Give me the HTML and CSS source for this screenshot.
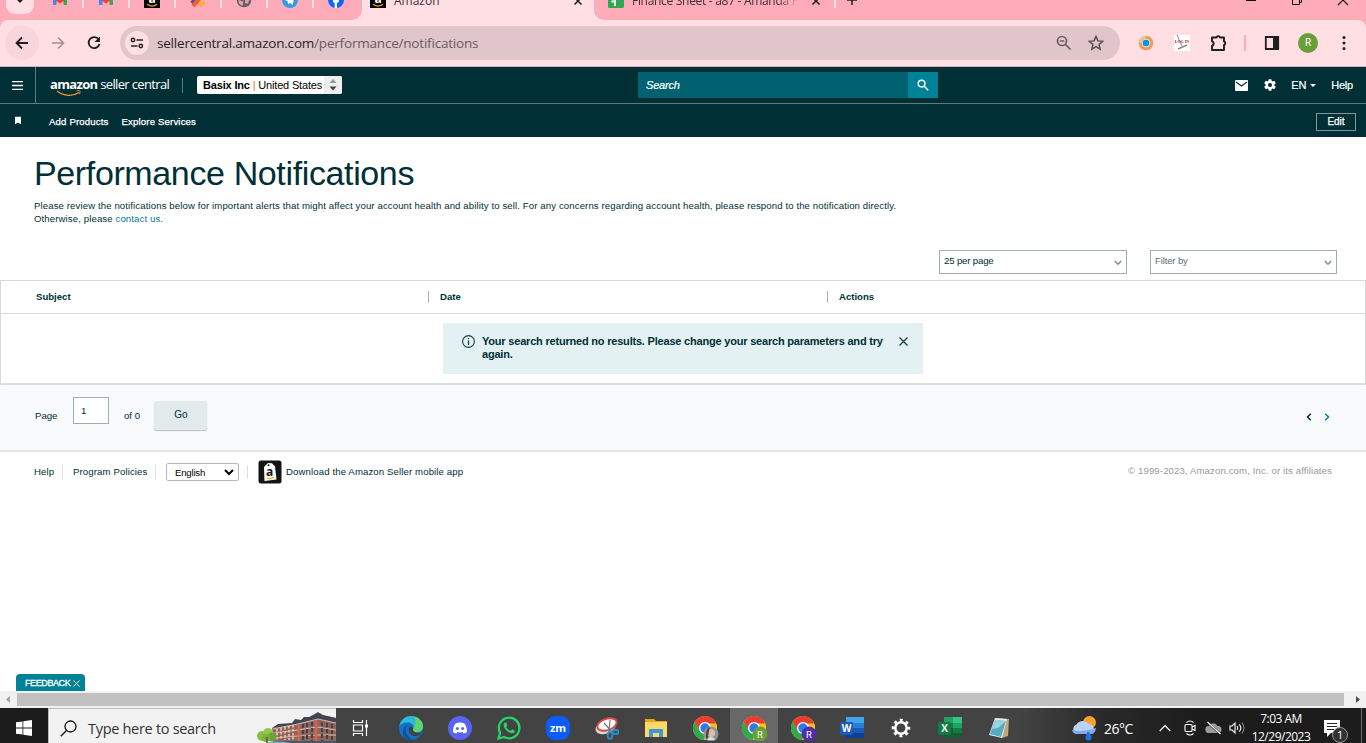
FILE: index.html
```html
<!DOCTYPE html>
<html lang="en">
<head>
    <meta charset="UTF-8">
    <meta name="viewport" content="width=device-width, initial-scale=1.0">
    <title>Performance Notifications</title>
    <link rel="stylesheet" href="styles.css">
</head>
<body>
    <!-- shared icons -->
    <svg class="defs" width="0" height="0">
        <symbol id="gmail" viewBox="0 0 16 16">
            <path fill="#4285f4" d="M1 3h3.500v10H2a1 1 0 0 1-1-1z"/>
            <path fill="#34a853" d="M11.500 3H15v9a1 1 0 0 1-1 1h-2.500z"/>
            <path fill="#ea4335" d="M1 3l7 5 7-5v3.500L8 11.500 1 6.500z"/>
        </symbol>
        <symbol id="amazon" viewBox="0 0 16 16">
            <rect width="16" height="16" fill="#000"/>
            <text x="8" y="11" text-anchor="middle" class="icon-letter">a</text>
            <path d="M3 12c3 2.500 7 2.500 10 .3" fill="none" stroke="#f90" stroke-width="1.300"/>
        </symbol>
        <symbol id="chrome" viewBox="0 0 24 24">
            <circle cx="12" cy="12" r="12" fill="#fbc116"/>
            <path fill="#ea3d2f" d="M1.600 6A12 12 0 0 1 22.400 6H12L6.800 15z"/>
            <path fill="#2da94f" d="M1.600 6l5.200 9L12 18l-1 6A12 12 0 0 1 1.600 6z"/>
            <path fill="#fbc116" d="M22.400 6A12 12 0 0 1 11.500 24l5.700-9L15 7z"/>
            <path fill="#ea3d2f" d="M12 6h10.400l.5 1.500H12z"/>
            <circle cx="12" cy="12" r="6" fill="#fff"/>
            <circle cx="12" cy="12" r="4.700" fill="#2f78ed"/>
        </symbol>
    </svg>

    <div class="browser">
        <div class="tab-strip">
            <div class="tabs-left">
                <div class="tab-search">
                    <svg width="10" height="10" viewBox="0 0 10 10"><path d="M1.500 3L5 6.500 8.500 3" fill="none" stroke="#1f1f1f" stroke-width="2"/></svg>
                </div>
                <div class="mini-tab"><svg width="16" height="16"><use href="#gmail"/></svg></div>
                <div class="mini-tab"><svg width="16" height="16"><use href="#gmail"/></svg></div>
                <div class="mini-tab"><svg width="16" height="16"><use href="#amazon"/></svg></div>
                <div class="mini-tab">
                    <svg width="16" height="16" viewBox="0 0 16 16">
                        <path d="M1.500 11l5-6" stroke="#4452a8" stroke-width="3"/>
                        <path d="M3 14l8-9" stroke="#ff5a1f" stroke-width="4"/>
                        <path d="M9.500 14l5-4" stroke="#ffb02e" stroke-width="4"/>
                    </svg>
                </div>
                <div class="mini-tab">
                    <svg width="16" height="16" viewBox="0 0 16 16">
                        <circle cx="8" cy="8" r="7.300" fill="#5f6368"/>
                        <path d="M2.500 8l5 1.500-1 4.500A6 6 0 0 1 2.500 8zM9 8h4.500l-2 4-2.500-1z" fill="#e79ea9"/>
                    </svg>
                </div>
                <div class="mini-tab">
                    <svg width="16" height="16" viewBox="0 0 16 16">
                        <circle cx="8" cy="8" r="8" fill="#2f9be8"/>
                        <path d="M3 8l9.500-4-1.800 9-3-2.200-1.600 1.600-.4-3z" fill="#fff"/>
                    </svg>
                </div>
                <div class="mini-tab last">
                    <svg width="16" height="16" viewBox="0 0 16 16">
                        <circle cx="8" cy="8" r="8" fill="#0866ff"/>
                        <path d="M6.700 16v-5.500H5V8h1.700V6.500C6.700 4 8 3.200 11 3.600v2c-1.500 0-2 .1-2 1.200V8h2l-.4 2.500H9V16z" fill="#fff"/>
                    </svg>
                </div>
            </div>
            <div class="tab active">
                <svg width="16" height="16"><use href="#amazon"/></svg>
                <span class="tab-title">Amazon</span>
                <svg class="tab-close" width="10" height="10" viewBox="0 0 10 10"><path d="M1.500 1.500l7 7M8.500 1.500l-7 7" stroke="#1f1f1f" stroke-width="1.500"/></svg>
            </div>
            <div class="tabs-right">
                <div class="tab second">
                    <svg width="16" height="16" viewBox="0 0 16 16"><rect width="16" height="16" rx="1.500" fill="#2fa84f"/><path d="M3.500 6h9M3.500 9.500h3.500M7 4v10" stroke="#fff" stroke-width="1.800"/></svg>
                    <span class="tab-title">Finance Sheet - a87 - Amanda P</span>
                    <svg class="tab-close" width="10" height="10" viewBox="0 0 10 10"><path d="M1.500 1.500l7 7M8.500 1.500l-7 7" stroke="#1f1f1f" stroke-width="1.500"/></svg>
                </div>
                <svg class="new-tab" width="12" height="12" viewBox="0 0 12 12"><path d="M6 1v10M1 6h10" stroke="#1f1f1f" stroke-width="1.500"/></svg>
                <div class="window-controls">
                    <svg width="12" height="12" viewBox="0 0 12 12"><path d="M1 6.500h10" stroke="#000"/></svg>
                    <svg width="12" height="12" viewBox="0 0 12 12"><path d="M1.500 3.500h7v7h-7zM3.500 3V1.500h7v7H9" fill="none" stroke="#000"/></svg>
                    <svg width="12" height="12" viewBox="0 0 12 12"><path d="M1 1l10 10M11 1L1 11" stroke="#000" stroke-width="1.100"/></svg>
                </div>
            </div>
        </div>

        <div class="toolbar">
            <div class="nav-btn hover">
                <svg width="16" height="16" viewBox="0 0 16 16"><path d="M14 8H3M8 2.500L2.500 8 8 13.500" fill="none" stroke="#1f1f1f" stroke-width="1.800"/></svg>
            </div>
            <div class="nav-btn">
                <svg width="16" height="16" viewBox="0 0 16 16"><path d="M2 8h11M8 2.500L13.500 8 8 13.500" fill="none" stroke="#a78f94" stroke-width="1.600"/></svg>
            </div>
            <div class="nav-btn">
                <svg width="16" height="16" viewBox="0 0 16 16"><path d="M12.700 4.500A5.500 5.500 0 1 0 13.500 9" fill="none" stroke="#1f1f1f" stroke-width="1.800"/><path d="M14 1.500V7H8.500z" fill="#1f1f1f"/></svg>
            </div>
            <div class="omnibox">
                <div class="site-info">
                    <svg width="14" height="12" viewBox="0 0 14 12"><g fill="none" stroke="#2b2226" stroke-width="1.500"><circle cx="3" cy="3" r="1.700"/><path d="M6.500 3H13M1 9h6.500"/><circle cx="10.800" cy="9" r="1.700"/></g></svg>
                </div>
                <div class="url">sellercentral.amazon.com<span>/performance/notifications</span></div>
                <svg class="zoom-icon" width="16" height="16" viewBox="0 0 16 16"><g fill="none" stroke="#6b5d61" stroke-width="1.700"><circle cx="6" cy="6" r="4.500"/><path d="M9.500 9.500l5 5M3.800 6h4.400"/></g></svg>
                <svg width="16" height="16" viewBox="0 0 16 16"><path d="M8 1.500l1.900 4.400 4.800.4-3.600 3.200 1 4.700L8 11.700l-4.100 2.500 1-4.700-3.600-3.200 4.800-.4z" fill="none" stroke="#5b4e52" stroke-width="1.500"/></svg>
            </div>
            <div class="extensions">
                <svg width="16" height="16" viewBox="0 0 16 16"><circle cx="8" cy="8" r="7.300" fill="#f29a5a"/><path d="M8 .7A7.300 7.300 0 0 0 .7 8h3A4.500 4.500 0 0 1 8 3.500z" fill="#f7bd8c"/><circle cx="8" cy="8" r="4.300" fill="#cde9f6"/><circle cx="8" cy="8" r="3.300" fill="#0b95d8"/></svg>
                <svg width="16" height="16" viewBox="0 0 16 16"><rect width="16" height="16" fill="#fff"/><path d="M3 0l5 11" stroke="#8e8a8a"/><path d="M4 14l9-4" stroke="#8e8a8a" stroke-width="1.800"/><text x="8" y="8" text-anchor="middle" class="login-letter">LOG IN</text></svg>
                <svg width="18" height="18" viewBox="0 0 18 18"><path d="M2 3.500h4.500a1.800 1.800 0 0 1 3.500 0h4V7.500a1.800 1.800 0 0 1 0 3.500v5H2v-4.300a2.200 2.200 0 0 0 0-4.300z" fill="none" stroke="#1f1f1f" stroke-width="1.900" stroke-linejoin="round"/></svg>
            </div>
            <div class="toolbar-sep"></div>
            <svg class="side-panel" width="16" height="16" viewBox="0 0 16 16"><path d="M1.800 2h12.400v12H1.800z" fill="none" stroke="#1f1f1f" stroke-width="1.800"/><path d="M9 2h5v12H9z" fill="#1f1f1f"/></svg>
            <div class="avatar">R</div>
            <svg class="menu-dots" width="4" height="16" viewBox="0 0 4 16"><g fill="#1f1f1f"><circle cx="2" cy="2.500" r="1.500"/><circle cx="2" cy="8" r="1.500"/><circle cx="2" cy="13.500" r="1.500"/></g></svg>
        </div>
    </div>

    <header class="header">
        <div class="hamburger">
            <svg width="11" height="9" viewBox="0 0 11 9"><path d="M0 .5h11M0 4.500h11M0 8.500h11" stroke="#fff" stroke-width="1.300"/></svg>
        </div>
        <div class="logo">
            <div class="logo-text"><b>amazon</b> seller central</div>
            <svg class="smile" width="28" height="7" viewBox="0 0 28 7"><path d="M1 1c7 5.500 16 5.500 22 1.500" fill="none" stroke="#f19a38" stroke-width="1.300"/><path d="M20.500 1c3-.8 4.500-.5 3 3" fill="none" stroke="#f19a38"/></svg>
        </div>
        <div class="account">
            <span class="account-name"><b>Basix Inc</b> <i>|</i> United States</span>
            <span class="account-arrows">
                <svg width="8" height="12" viewBox="0 0 8 12"><path d="M4 0l3.500 4h-7z" fill="#999"/><path d="M4 11.500L.5 7.500h7z" fill="#444"/></svg>
            </span>
        </div>
        <div class="search">
            <div class="search-input">Search</div>
            <div class="search-btn">
                <svg width="12" height="12" viewBox="0 0 12 12"><circle cx="4.600" cy="4.600" r="3.400" fill="none" stroke="#fff" stroke-width="1.400"/><path d="M7.200 7.200l4 4" stroke="#fff" stroke-width="1.500"/></svg>
            </div>
        </div>
        <div class="header-links">
            <svg width="13" height="11" viewBox="0 0 13 11"><rect width="13" height="11" rx="1" fill="#fff"/><path d="M1 2l5.500 4L12 2" fill="none" stroke="#002f36" stroke-width="1.100"/></svg>
            <svg class="gear" width="14" height="14" viewBox="0 0 24 24"><path fill="#fff" d="M19.400 13a7.500 7.500 0 0 0 0-2l2.200-1.700a.5.500 0 0 0 .1-.7l-2.100-3.600a.5.500 0 0 0-.6-.2l-2.600 1a7.600 7.600 0 0 0-1.700-1L14.300 2h-4.600l-.4 2.800a7.600 7.600 0 0 0-1.700 1L5 4.800a.5.500 0 0 0-.6.2L2.300 8.600a.5.500 0 0 0 .1.700L4.600 11a7.500 7.500 0 0 0 0 2l-2.200 1.700a.5.500 0 0 0-.1.700L4.400 19c.1.200.4.300.6.200l2.600-1a7.600 7.600 0 0 0 1.700 1l.4 2.800h4.600l.4-2.800a7.600 7.600 0 0 0 1.700-1l2.600 1c.2.100.5 0 .6-.2l2.100-3.600a.5.500 0 0 0-.1-.7zM12 15.500a3.500 3.500 0 1 1 0-7 3.500 3.500 0 0 1 0 7z"/></svg>
            <span class="lang">EN</span>
            <span class="caret"></span>
            <span class="help">Help</span>
        </div>
    </header>
    <nav class="subnav">
        <svg width="6" height="9" viewBox="0 0 7 9"><path d="M0 0h7v9L3.500 6.800 0 9z" fill="#fff"/></svg>
        <a class="add-products">Add Products</a>
        <a class="explore">Explore Services</a>
        <button class="edit-btn">Edit</button>
    </nav>

    <main>
        <div class="intro">
            <h1>Performance Notifications</h1>
            <p>Please review the notifications below for important alerts that might affect your account health and ability to sell. For any concerns regarding account health, please respond to the notification directly.<br>Otherwise, please <a>contact us.</a></p>
        </div>
        <div class="filters">
            <div class="dropdown per-page"><span>25 per page</span>
                <svg width="8" height="6" viewBox="0 0 8 6"><path d="M.8 1L4 4.300 7.200 1" fill="none" stroke="#7f8b8c" stroke-width="1.400"/></svg>
            </div>
            <div class="dropdown filter-by"><span>Filter by</span>
                <svg width="8" height="6" viewBox="0 0 8 6"><path d="M.8 1L4 4.300 7.200 1" fill="none" stroke="#7f8b8c" stroke-width="1.400"/></svg>
            </div>
        </div>
        <div class="table">
            <div class="table-head">
                <div class="th subject"><span>Subject</span></div>
                <div class="th date"><span>Date</span></div>
                <div class="th actions"><span>Actions</span></div>
            </div>
            <div class="table-body">
                <div class="alert">
                    <svg width="13" height="13" viewBox="0 0 13 13"><circle cx="6.500" cy="6.500" r="5.900" fill="none" stroke="#153f46" stroke-width="1.100"/><path d="M6.500 5.500V10M6.500 3v1.300" stroke="#153f46" stroke-width="1.300"/></svg>
                    <p>Your search returned no results. Please change your search parameters and try<br>again.</p>
                    <svg class="alert-close" width="9" height="9" viewBox="0 0 9 9"><path d="M.5.5l8 8M8.500.5l-8 8" stroke="#153f46" stroke-width="1.200"/></svg>
                </div>
            </div>
        </div>
        <div class="pagination">
            <span class="page-label">Page</span>
            <div class="page-input">1</div>
            <span class="page-total">of 0</span>
            <button class="go-btn">Go</button>
            <div class="arrows">
                <svg width="6" height="8" viewBox="0 0 6 8"><path d="M4.800.8L1.500 4l3.300 3.200" fill="none" stroke="#002f36" stroke-width="1.500"/></svg>
                <svg width="6" height="8" viewBox="0 0 6 8"><path d="M1.200.8L4.500 4 1.200 7.200" fill="none" stroke="#008296" stroke-width="1.500"/></svg>
            </div>
        </div>
    </main>

    <footer class="footer">
        <a class="f-help">Help</a>
        <a class="f-policies">Program Policies</a>
        <div class="f-lang">
            <div class="lang-select"><span>English</span>
                <svg width="10" height="7" viewBox="0 0 10 7"><path d="M1 1l4 4 4-4" fill="none" stroke="#000" stroke-width="2"/></svg>
            </div>
        </div>
        <div class="f-app">
            <svg width="24" height="24" viewBox="0 0 24 24"><rect x=".5" y=".5" width="23" height="23" rx="2.500" fill="#141414"/><path d="M6 7l4-4 4 .3 3 3.200 1.500 13-12 1.500z" fill="#fff"/><circle cx="10.500" cy="5.300" r="1" fill="#141414"/><text x="11.800" y="15.500" text-anchor="middle" class="app-letter">a</text><path d="M9 18c2.500 1 5 .6 7-1" fill="none" stroke="#f5a623" stroke-width="1.200"/></svg>
            <a>Download the Amazon Seller mobile app</a>
        </div>
        <span class="copyright">© 1999-2023, Amazon.com, Inc. or its affiliates</span>
    </footer>

    <div class="feedback"><span>FEEDBACK</span>
        <svg width="7" height="7" viewBox="0 0 7 7"><path d="M.5.5l6 6M6.500.5l-6 6" stroke="#fff"/></svg>
    </div>

    <div class="scrollbar">
        <svg width="17" height="17" viewBox="0 0 17 17"><path d="M6 8.500L10 5v7z" fill="#a3a3a3"/></svg>
        <div class="thumb"></div>
        <svg width="22" height="17" viewBox="0 0 22 17"><path d="M16 8.500L12 5v7z" fill="#505050"/></svg>
    </div>

    <div class="taskbar">
        <div class="start">
            <svg width="16" height="16" viewBox="0 0 16 16"><path fill="#fff" d="M0 2.300L6.500 1.400v6.200H0zM7.300 1.200L16 0v7.600H7.300zM0 8.400h6.500v6.200L0 13.700zM7.300 8.400H16V16l-8.700-1.200z"/></svg>
        </div>
        <div class="task-search">
            <svg width="17" height="17" viewBox="0 0 17 17"><circle cx="10.500" cy="6.500" r="5.500" fill="none" stroke="#111" stroke-width="1.300"/><path d="M6.500 10.500L.8 16.200" stroke="#111" stroke-width="1.300"/></svg>
            <span>Type here to search</span>
            <svg class="building" width="80" height="34" viewBox="0 0 80 34">
                <path d="M16 17L40 11l20-6 4-3 3 2 13 3v27H18z" fill="#9a6255"/>
                <path d="M16 17L22 13l14-1 3-4 6 1 3-3 5 0 4-2 5-3 4 3 14 3v5L62 8 40 13z" fill="#3e4654"/>
                <path d="M17 18l25-5 20-5 18 4M17 22l25-3 19-3 19 3M18 27l24-2 19-1h19" fill="none" stroke="#e3cfc4" stroke-width=".8"/>
                <path d="M21 18v11M25 17v12M29 16v13M33 15v14M37 14v15" stroke="#d8d5d0" stroke-width="1.500" stroke-dasharray="2.500 1.500"/>
                <path d="M47 13v17M51 12v18M56 11v19M66 11v19M71 12v18M76 13v17" stroke="#34465a" stroke-width="2.200" stroke-dasharray="4 2"/>
                <path d="M43 13v19M60 9v23" stroke="#c9694f" stroke-width="2.500"/>
                <path d="M17 30h63v4H17z" fill="#475764"/>
                <path d="M5 34c10-5 25-4 38 0z" fill="#61b9c6"/>
                <circle cx="6" cy="25" r="5" fill="#8bbd45"/><circle cx="12" cy="22" r="5" fill="#93c64c"/><circle cx="16" cy="26" r="4.500" fill="#6fa036"/><circle cx="10" cy="27" r="4" fill="#7db13e"/>
                <path d="M11 26v8" stroke="#6a4e32" stroke-width="1.500"/>
            </svg>
        </div>
        <div class="task-apps">
            <div class="task task-view">
                <svg width="17" height="16" viewBox="0 0 17 16"><path d="M1.500 0v2.500h9V0M1.500 5h9v6h-9zM1.500 16v-2.500h9V16M14.500 0v16" fill="none" stroke="#fff" stroke-width="1.200"/><path d="M13 4.500h3v3h-3z" fill="#fff"/></svg>
            </div>
            <div class="task">
                <svg width="24" height="24" viewBox="0 0 24 24">
                    <circle cx="12" cy="12" r="12" fill="#1272c4"/>
                    <path d="M.3 10C2 3 7 0 12 0c7 0 12 5 12 10.500 0 4-3 5.500-6 5.500-3.500 0-4.500-1.500-4-2.500C16 9 12 6.500 8.500 6.500 5 6.500 2 8 .3 10z" fill="#2fb8d8"/>
                    <path d="M15 .5c6 1.500 9 5.500 9 10 0 4-3 5.500-6 5.500-3.500 0-4.500-1.500-4-2.500 2-2.500 4-8 1-13z" fill="#5fd46a"/>
                    <path d="M14 13.500c0 3.500 5 4.500 9 3-2 3.500-5.500 4-8 3.500-4-1-6-4.500-5-8 .7-2 3-2 4 0z" fill="#424242"/>
                    <path d="M8 9c-3 6 0 12 6 14.800C8 24.500 3 21 4 15c.5-3 2-5 4-6z" fill="#0f4f9d"/>
                </svg>
            </div>
            <div class="task">
                <svg width="24" height="24" viewBox="0 0 24 24"><circle cx="12" cy="12" r="12" fill="#5865f2"/><path d="M7.500 7.500c3-1.200 6-1.200 9 0 2 3 2.700 6 2.500 8.500-1.500 1-2.500 1.300-3.500 1.500l-.9-1.400c-1.700.4-3.500.4-5.200 0l-.9 1.400C7.500 17.300 6.300 17 5 16c-.2-3 .7-6 2.500-8.500z" fill="#fff"/><circle cx="9.400" cy="12.500" r="1.500" fill="#5865f2"/><circle cx="14.600" cy="12.500" r="1.500" fill="#5865f2"/></svg>
            </div>
            <div class="task">
                <svg width="24" height="24" viewBox="0 0 24 24"><path d="M1.500 22.500l1.600-5.600A10.300 10.300 0 1 1 7.200 21z" fill="none" stroke="#25d366" stroke-width="2.300"/><path d="M8 6.500c-2 1-1.700 3.700 0 6.200 2.200 3.200 5.500 5 7.800 4.600 1.500-.3 2.200-1.500 2-2.600l-2.600-1.400-1.500 1.500c-2-.7-3.500-2.200-4.400-4l1.100-1.400-1-2.700z" fill="#25d366"/></svg>
            </div>
            <div class="task">
                <svg width="24" height="24" viewBox="0 0 24 24"><rect width="24" height="24" rx="9" fill="#0b5cff"/><text x="12" y="15.500" text-anchor="middle" class="zoom-letter">zm</text></svg>
            </div>
            <div class="task">
                <svg width="24" height="24" viewBox="0 0 24 24"><ellipse cx="11" cy="11" rx="10.500" ry="6.500" transform="rotate(-20 11 12)" fill="#d7d7da"/><ellipse cx="12" cy="8.500" rx="10" ry="5.700" transform="rotate(-18 12 8.500)" fill="#fff" stroke="#d94a48" stroke-width="2"/><path d="M9 7l9 10M15 4l-1 13" stroke="#777" stroke-width="1.200"/><g fill="none" stroke="#2b8fd0" stroke-width="1.800"><ellipse cx="15" cy="19.500" rx="2.300" ry="3.300"/><ellipse cx="20.500" cy="16" rx="3.300" ry="2"/></g></svg>
            </div>
            <div class="task">
                <svg width="24" height="24" viewBox="0 0 24 24"><path d="M1 3h9l2 2h11v16H1z" fill="#e8a51d"/><path d="M1 6h22v15H1z" fill="#ffd767"/><path d="M5 13h14v8h-4v-4H9v4H5z" fill="#3c99d9"/></svg>
            </div>
            <div class="task">
                <svg width="28" height="26" viewBox="-2 -1 28 26"><use href="#chrome" width="24" height="24"/><circle cx="18" cy="18" r="7.500" fill="#879894"/><circle cx="18" cy="17" r="4" fill="#e0b8ad"/><path d="M13 22c0-8 1-10 4-11-1 4-2 8-2 12z" fill="#4b4445"/><path d="M14 24c1-4 7-4 8 0z" fill="#d9dde0"/></svg>
            </div>
            <div class="task current">
                <svg width="28" height="26" viewBox="-2 -1 28 26"><use href="#chrome" width="24" height="24"/><circle cx="18" cy="18" r="7.500" fill="#689f38"/><text x="18" y="21.500" text-anchor="middle" class="badge-letter">R</text></svg>
            </div>
            <div class="task">
                <svg width="28" height="26" viewBox="-2 -1 28 26"><use href="#chrome" width="24" height="24"/><circle cx="18" cy="18" r="7.500" fill="#512da8"/><text x="18" y="21.500" text-anchor="middle" class="badge-letter">R</text></svg>
            </div>
            <div class="task">
                <svg width="24" height="24" viewBox="0 0 24 24"><path d="M6 1h18v6H6z" fill="#41a5ee"/><path d="M6 7h18v5H6z" fill="#2b7cd3"/><path d="M6 12h18v5H6z" fill="#185abd"/><path d="M6 17h18v5H6z" fill="#103f91"/><rect y="6" width="13" height="13" rx="1" fill="#185abd"/><text x="6.500" y="16" text-anchor="middle" class="office-letter">W</text></svg>
            </div>
            <div class="task">
                <svg width="24" height="24" viewBox="0 0 24 24"><circle cx="12" cy="12" r="5.700" fill="none" stroke="#fff" stroke-width="2.500"/><circle cx="12" cy="12" r="7.800" fill="none" stroke="#fff" stroke-width="3" stroke-dasharray="3 3.126" stroke-dashoffset="1.500"/></svg>
            </div>
            <div class="task">
                <svg width="24" height="24" viewBox="0 0 24 24"><path d="M6 1h9v6H6z" fill="#21a366"/><path d="M15 1h9v6h-9z" fill="#33c481"/><path d="M6 7h9v5H6z" fill="#107c41"/><path d="M15 7h9v5h-9z" fill="#21a366"/><path d="M6 12h18v10H6z" fill="#185c37"/><path d="M15 12h9v5h-9z" fill="#107c41"/><rect y="6" width="13" height="13" rx="1" fill="#107c41"/><text x="6.500" y="16" text-anchor="middle" class="office-letter">X</text></svg>
            </div>
            <div class="task">
                <svg width="24" height="24" viewBox="0 0 24 24"><path d="M9 2l13 1-1 17-6 2z" fill="#c2a878"/><path d="M8 2l12 1-5 19-13-3z" fill="#d8eef4"/><path d="M8 4l11 1-5 16-11-3z" fill="#55abc0"/><path d="M8 4l11 1-8 7-6 1z" fill="#9ad3de"/></svg>
            </div>
        </div>
        <div class="tray">
            <svg class="weather" width="26" height="26" viewBox="0 0 26 26"><circle cx="18.500" cy="7.500" r="6.500" fill="#f8a12f"/><path d="M6 19a5 5 0 0 1-.5-9.500A7.500 7.500 0 0 1 18 9a5.500 5.500 0 0 1 2.500 10z" fill="#b9d2f7"/><path d="M6 19a5 5 0 0 1-5-4c7 2 15 1 24-2-.5 4-2.500 6-4.500 6z" fill="#82aaec"/><path d="M17 16c2 3 3.500 4.500 3.500 6.500a3 3 0 0 1-6 0c0-2 1.500-4 2.500-6.500z" fill="#1d76e8"/></svg>
            <span class="temp">26°C</span>
            <svg class="chevron" width="12" height="8" viewBox="0 0 12 8"><path d="M.7 7L6 1.500 11.300 7" fill="none" stroke="#fff" stroke-width="1.200"/></svg>
            <svg class="meet" width="12" height="16" viewBox="0 0 12 16"><g fill="none" stroke="#fff" stroke-width="1.100"><rect x="1" y="4.500" width="7" height="7" rx="1"/><path d="M8 7l3-1.500v5L8 9M2.500 2.500c2-1.700 5-1.700 7 0M2.500 13.500c2 1.700 5 1.700 7 0"/></g></svg>
            <svg class="cloud" width="17" height="14" viewBox="0 0 17 14"><path d="M4 12a3.500 3.500 0 0 1-.3-7A5 5 0 0 1 12.500 5a3.500 3.500 0 0 1 1 7z" fill="#9b9b9b"/><path d="M2 1l13.500 12" stroke="#222" stroke-width="2.300"/><path d="M2.500 1l13 12" stroke="#fff" stroke-width="1.100"/></svg>
            <svg class="sound" width="16" height="14" viewBox="0 0 16 14"><g fill="none" stroke="#fff" stroke-width="1.100"><path d="M1 5h2l3-3v10L3 9H1zM8 5c1 1.300 1 2.700 0 4M10.300 3.300c1.800 2.300 1.800 5.100 0 7.400"/><path d="M12.800 1.500c2.600 3.300 2.600 7.700 0 11" stroke="#888"/></g></svg>
            <div class="clock"><span>7:03 AM</span><span>12/29/2023</span></div>
            <div class="notice">
                <svg width="16" height="17" viewBox="0 0 16 17"><path d="M0 0h16v13H7l-4 4v-4H0z" fill="#fff"/><path d="M3 3.500h10M3 6.500h10M3 9.500h7" stroke="#222" stroke-width="1.100"/></svg>
                <span class="notice-count">1</span>
            </div>
        </div>
    </div>
</body>
</html>
```
FILE: styles.css
```css
* {
    box-sizing: border-box;
}
body {
    margin: 0;
    width: 1366px;
    height: 743px;
    overflow: hidden;
    display: flex;
    flex-direction: column;
    background-color: #fff;
    color: #002f36;
    font-family: "Liberation Sans", Arial, sans-serif;
    font-size: 9.6px;
}
svg {
    display: block;
    flex-shrink: 0;
}
.defs {
    position: absolute;
}
button {
    font-family: inherit;
    padding: 0;
}
span, a, p {
    white-space: nowrap;
}

/* browser chrome */
.browser {
    height: 67px;
    flex-shrink: 0;
    overflow: hidden;
    background-color: #ffacba;
    font-family: "Open Sans", "Noto Sans", sans-serif;
}
.tab-strip {
    display: flex;
    height: 40px;
    margin-top: -20px;
    background-color: #ffdee4;
    color: #3b3033;
    font-size: 12px;
}
.tabs-left {
    display: flex;
    align-items: center;
    width: 362px;
    padding-left: 6px;
    background-color: #ffacba;
    border-bottom-right-radius: 10px;
}
.tab-search {
    display: flex;
    align-items: center;
    justify-content: center;
    width: 28px;
    height: 28px;
    margin-right: 4px;
    border-radius: 9px;
    background-color: #ffdee4;
}
.mini-tab {
    display: flex;
    align-items: center;
    justify-content: center;
    flex-shrink: 0;
    width: 46px;
    height: 16px;
    border-right: 2px solid #ffdee4;
}
.mini-tab.last {
    border-color: transparent;
}
.tab {
    display: flex;
    align-items: center;
}
.tab-title {
    line-height: 18px;
    margin-top: 2px;
    margin-left: 8px;
}
.tab.active {
    width: 232px;
    padding-left: 8px;
}
.tab-close {
    margin-left: auto;
    margin-top: 2px;
}
.tab.active .tab-close {
    margin-right: 11px;
}
.tabs-right {
    display: flex;
    align-items: center;
    flex: 1;
    padding-left: 14px;
    background-color: #ffacba;
    border-bottom-left-radius: 10px;
}
.tab.second {
    width: 228px;
    height: 16px;
    border-right: 2px solid #ffdee4;
}
.tab.second .tab-title {
    width: 166px;
    overflow: hidden;
    letter-spacing: -0.3px;
    -webkit-mask-image: linear-gradient(to right, #000 88%, transparent);
    mask-image: linear-gradient(to right, #000 88%, transparent);
}
.tab.second .tab-close {
    margin-right: 13px;
}
.new-tab {
    margin-left: 10px;
}
.window-controls {
    display: flex;
    gap: 34px;
    margin-left: auto;
    margin-right: 17px;
}
.toolbar {
    display: flex;
    align-items: center;
    height: 47px;
    padding: 0 20px 1px 5px;
    border-radius: 8px 8px 0 0;
    border-bottom: 1px solid #d2b4ba;
    background-color: #ffdee4;
}
.nav-btn {
    display: flex;
    align-items: center;
    justify-content: center;
    width: 34px;
    height: 34px;
    margin-right: 2px;
    border-radius: 50%;
}
.nav-btn.hover {
    background-color: #f7d7dd;
}
.omnibox {
    display: flex;
    align-items: center;
    width: 1000px;
    height: 34px;
    margin-left: 7px;
    padding: 0 16px 0 5px;
    border-radius: 17px;
    background-color: #e0c5ca;
}
.site-info {
    display: flex;
    align-items: center;
    justify-content: center;
    width: 24px;
    height: 24px;
    border-radius: 50%;
    background-color: #ffdee4;
}
.url {
    margin-left: 8px;
    color: #2b2226;
    font-size: 13.5px;
    letter-spacing: -0.2px;
    white-space: nowrap;
}
.url span {
    color: #6b5a60;
}
.zoom-icon {
    margin-left: auto;
    margin-right: 16px;
}
.extensions {
    display: flex;
    align-items: center;
    gap: 20px;
    margin-left: 18px;
}
.toolbar-sep {
    width: 2px;
    height: 16px;
    margin-left: 16px;
    background-color: #ffacba;
}
.side-panel {
    margin-left: 18px;
}
.avatar {
    width: 20px;
    height: 20px;
    margin-left: 18px;
    border-radius: 50%;
    background-color: #689f38;
    color: #fff;
    font: 10px/20px Roboto, sans-serif;
    text-align: center;
}
.menu-dots {
    margin-left: 24px;
}

/* seller central header */
.header {
    display: flex;
    align-items: center;
    height: 37px;
    flex-shrink: 0;
    border-bottom: 1px solid #5f7a7e;
    background-color: #002f36;
    color: #fff;
    font-size: 11px;
}
.hamburger {
    display: flex;
    align-items: center;
    width: 36px;
    height: 36px;
    padding-left: 12px;
    border-right: 1px solid #5f7a7e;
}
.logo {
    display: flex;
    flex-direction: column;
    width: 147px;
    height: 15px;
    padding-left: 14px;
    border-right: 1px solid #5f7a7e;
    font-family: "Open Sans", sans-serif;
}
.logo-text {
    font-size: 13px;
    line-height: 14px;
    margin-top: -1px;
    white-space: nowrap;
    letter-spacing: -0.65px;
}
.smile {
    margin-left: 6px;
    margin-top: -1px;
}
.account {
    display: flex;
    width: 145px;
    height: 18px;
    margin-left: 14px;
    border-radius: 2px;
    background-color: #fff;
    color: #000;
    overflow: hidden;
}
.account-name {
    width: 127px;
    padding-left: 6px;
    line-height: 19px;
    letter-spacing: -0.17px;
}
.account-name i {
    color: #e77600;
    font-style: normal;
}
.account-arrows {
    display: flex;
    align-items: center;
    justify-content: center;
    flex: 1;
    background-color: #eee;
}
.search {
    display: flex;
    width: 300px;
    height: 26px;
    margin-left: 296px;
}
.search-input {
    flex: 1;
    padding-left: 8px;
    background-color: #006170;
    font-style: italic;
    line-height: 27px;
    letter-spacing: -0.2px;
    -webkit-text-stroke: 0.2px #fff;
}
.search-btn {
    display: flex;
    align-items: center;
    justify-content: center;
    width: 30px;
    background-color: #008296;
}
.header-links {
    display: flex;
    align-items: center;
    margin-left: auto;
    padding-right: 13px;
    letter-spacing: -0.2px;
    -webkit-text-stroke: 0.2px #fff;
}
.gear {
    margin-left: 15px;
    margin-right: 14px;
}
.caret {
    margin: 1px 15px 0 4px;
    border: 3px solid transparent;
    border-top-color: #fff;
    border-bottom: 0;
}
.subnav {
    display: flex;
    align-items: center;
    height: 33px;
    flex-shrink: 0;
    padding: 2px 10px 0 15px;
    background-color: #002f36;
    color: #fff;
    letter-spacing: 0.16px;
    -webkit-text-stroke: 0.25px #fff;
}
.subnav svg {
    margin-top: -3px;
}
.add-products {
    margin-left: 28px;
}
.explore {
    margin-left: 13px;
}
.edit-btn {
    width: 40px;
    height: 18px;
    margin-left: auto;
    border: 1px solid #7f9799;
    background-color: transparent;
    color: #fff;
    font-size: 10px;
    line-height: 15px;
}

/* page content */
.intro {
    height: 113px;
    padding: 16px 34px 0;
}
h1 {
    margin: 0;
    font-size: 34px;
    font-weight: normal;
    line-height: 40px;
    letter-spacing: -0.37px;
}
p {
    margin: 0;
}
.intro p {
    margin-top: 6px;
    line-height: 13px;
    letter-spacing: 0.113px;
}
.intro a {
    color: #008296;
}
.filters {
    display: flex;
    justify-content: flex-end;
    gap: 23px;
    height: 30px;
    padding-right: 29px;
}
.dropdown {
    display: flex;
    justify-content: space-between;
    width: 188px;
    height: 24px;
    padding: 0 4px;
    border: 1px solid #9fafb1;
    line-height: 20px;
    letter-spacing: -0.15px;
}
.dropdown svg {
    margin-top: 9px;
}
.filter-by {
    width: 187px;
    color: #5d7276;
}
.table {
    height: 105px;
    border: 1px solid #d5dbdb;
    border-bottom: 2px solid #d9dfe2;
}
.table-head {
    display: flex;
    height: 33px;
    border-bottom: 1px solid #d5dbdb;
    font-weight: bold;
}
.th {
    display: flex;
    align-items: center;
}
.th span {
    line-height: 12px;
}
.subject {
    width: 427px;
    padding-left: 35px;
}
.date {
    width: 399px;
}
.date span, .actions span {
    padding-left: 11px;
    border-left: 1px solid #a2b1b3;
}
.table-body {
    padding-top: 9px;
}
.alert {
    display: flex;
    width: 480px;
    height: 51px;
    margin: 0 auto;
    padding: 12px 15px 0 19px;
    background-color: #e3f1f2;
    font-size: 11px;
    font-weight: bold;
    line-height: 13px;
    letter-spacing: -0.2px;
}
.alert p {
    margin-left: 7px;
}
.alert-close {
    margin: 2px 0 0 auto;
}
.pagination {
    display: flex;
    height: 67px;
    padding: 12px 36px 0 35px;
    border-bottom: 2px solid #e0e4e8;
    background-color: #f9fafc;
}
.page-label, .page-total {
    margin-top: 13px;
}
.page-label {
    width: 38px;
}
.page-input {
    width: 36px;
    height: 27px;
    padding-left: 7px;
    border: 1px solid #9fafb1;
    background-color: #fff;
    line-height: 25px;
}
.page-total {
    width: 45px;
    padding-left: 15px;
}
.go-btn {
    width: 53px;
    height: 29px;
    margin-top: 4px;
    padding: 0 0 2px 1px;
    border: 0;
    border-radius: 2px;
    background-color: #e2ebec;
    box-shadow: 0 1px 1px #b5bfc1;
    color: #002f36;
    font-size: 10px;
}
.arrows {
    display: flex;
    gap: 12px;
    margin: 16px 0 0 auto;
}
.footer {
    display: flex;
    align-items: center;
    height: 39px;
    padding: 1px 34px 0;
    letter-spacing: 0.12px;
}
.f-help, .f-policies, .f-lang {
    height: 14px;
    line-height: 13px;
    border-right: 1px solid #d9dfe2;
}
.f-help {
    width: 29px;
}
.f-policies {
    width: 93px;
    padding-left: 10px;
}
.f-lang {
    display: flex;
    align-items: center;
    width: 92px;
    padding-left: 10px;
}
.lang-select {
    display: flex;
    align-items: center;
    justify-content: space-between;
    width: 73px;
    height: 18px;
    padding: 0 4px 0 8px;
    border: 1px solid #b8b8b8;
    border-radius: 2px;
    color: #000;
    letter-spacing: -0.2px;
}
.f-app {
    display: flex;
    align-items: center;
    gap: 4px;
    margin-left: 10px;
}
.f-app a {
    margin-top: -2px;
}
.copyright {
    margin: -4px 0 0 auto;
    color: #999;
}
.feedback {
    display: flex;
    align-items: center;
    width: 69px;
    height: 17px;
    margin: auto 0 0 16px;
    padding: 0 5px 0 9px;
    justify-content: space-between;
    border-radius: 4px 4px 0 0;
    background-color: #008296;
    color: #fff;
    font-size: 9px;
    letter-spacing: -0.4px;
    flex-shrink: 0;
    -webkit-text-stroke: 0.3px #fff;
}
.feedback svg {
    margin-top: 2px;
}

/* scrollbar and taskbar */
.scrollbar {
    display: flex;
    height: 17px;
    flex-shrink: 0;
    background-color: #f1f1f1;
}
.thumb {
    flex: 1;
    margin: 2px 0;
    background-color: #c1c1c1;
}
.taskbar {
    display: flex;
    height: 40px;
    margin-bottom: -5px;
    flex-shrink: 0;
    background: linear-gradient(to right, #424242 0, #434343 1020px, #2a2a2a 1100px, #1c1c1c 1200px);
    color: #fff;
    font-family: "Open Sans", "Noto Sans", sans-serif;
}
.start {
    display: flex;
    align-items: center;
    width: 48px;
    padding-left: 16px;
    background-color: #1c1c1c;
}
.task-search {
    display: flex;
    align-items: center;
    width: 288px;
    padding-left: 11px;
    border-top: 1px solid #b9bdb9;
    border-left: 1px solid #b9bdb9;
    background-color: #f2f2f2;
    color: #333;
    font-size: 14.5px;
    letter-spacing: -0.3px;
}
.task-search span {
    margin-left: 11px;
}
.building {
    margin: 2px 0 0 auto;
    align-self: flex-start;
}
.task-apps {
    display: flex;
    gap: 1px;
}
.task {
    display: flex;
    align-items: center;
    justify-content: center;
    width: 48px;
}
.task-view {
    width: 50px;
    padding-right: 1px;
}
.current {
    background-color: #686868;
}
.tray {
    display: flex;
    align-items: center;
    width: 291px;
    margin-left: auto;
    margin-right: 4px;
    border-right: 1px solid #6b6b6b;
    font-size: 14px;
    letter-spacing: -0.5px;
}
.temp {
    width: 55px;
    margin-left: 7px;
}
.meet {
    margin-left: 13px;
}
.cloud {
    margin-left: 9px;
}
.sound {
    margin-left: 7px;
}
.clock {
    display: flex;
    flex-direction: column;
    align-items: center;
    width: 72px;
    font-size: 12px;
    line-height: 18px;
}
.notice {
    position: relative;
    margin-left: 7px;
}
.notice-count {
    position: absolute;
    left: 8px;
    top: 7px;
    width: 16px;
    height: 16px;
    border: 1px solid #999;
    border-radius: 50%;
    background-color: #333;
    font-size: 11px;
    line-height: 14px;
    text-align: center;
}

/* letters inside icons */
.icon-letter {
    font: bold 12px "Open Sans", sans-serif;
    fill: #fff;
}
.login-letter {
    font: bold 4px "Liberation Serif", serif;
    fill: #a02020;
}
.app-letter {
    font: bold 12px "Open Sans", sans-serif;
    fill: #141414;
}
.zoom-letter {
    font: bold 11px "Open Sans", sans-serif;
    fill: #fff;
}
.badge-letter {
    font: 9.5px Roboto, sans-serif;
    fill: #fff;
}
.office-letter {
    font: bold 10px "Open Sans", sans-serif;
    fill: #fff;
}
```
